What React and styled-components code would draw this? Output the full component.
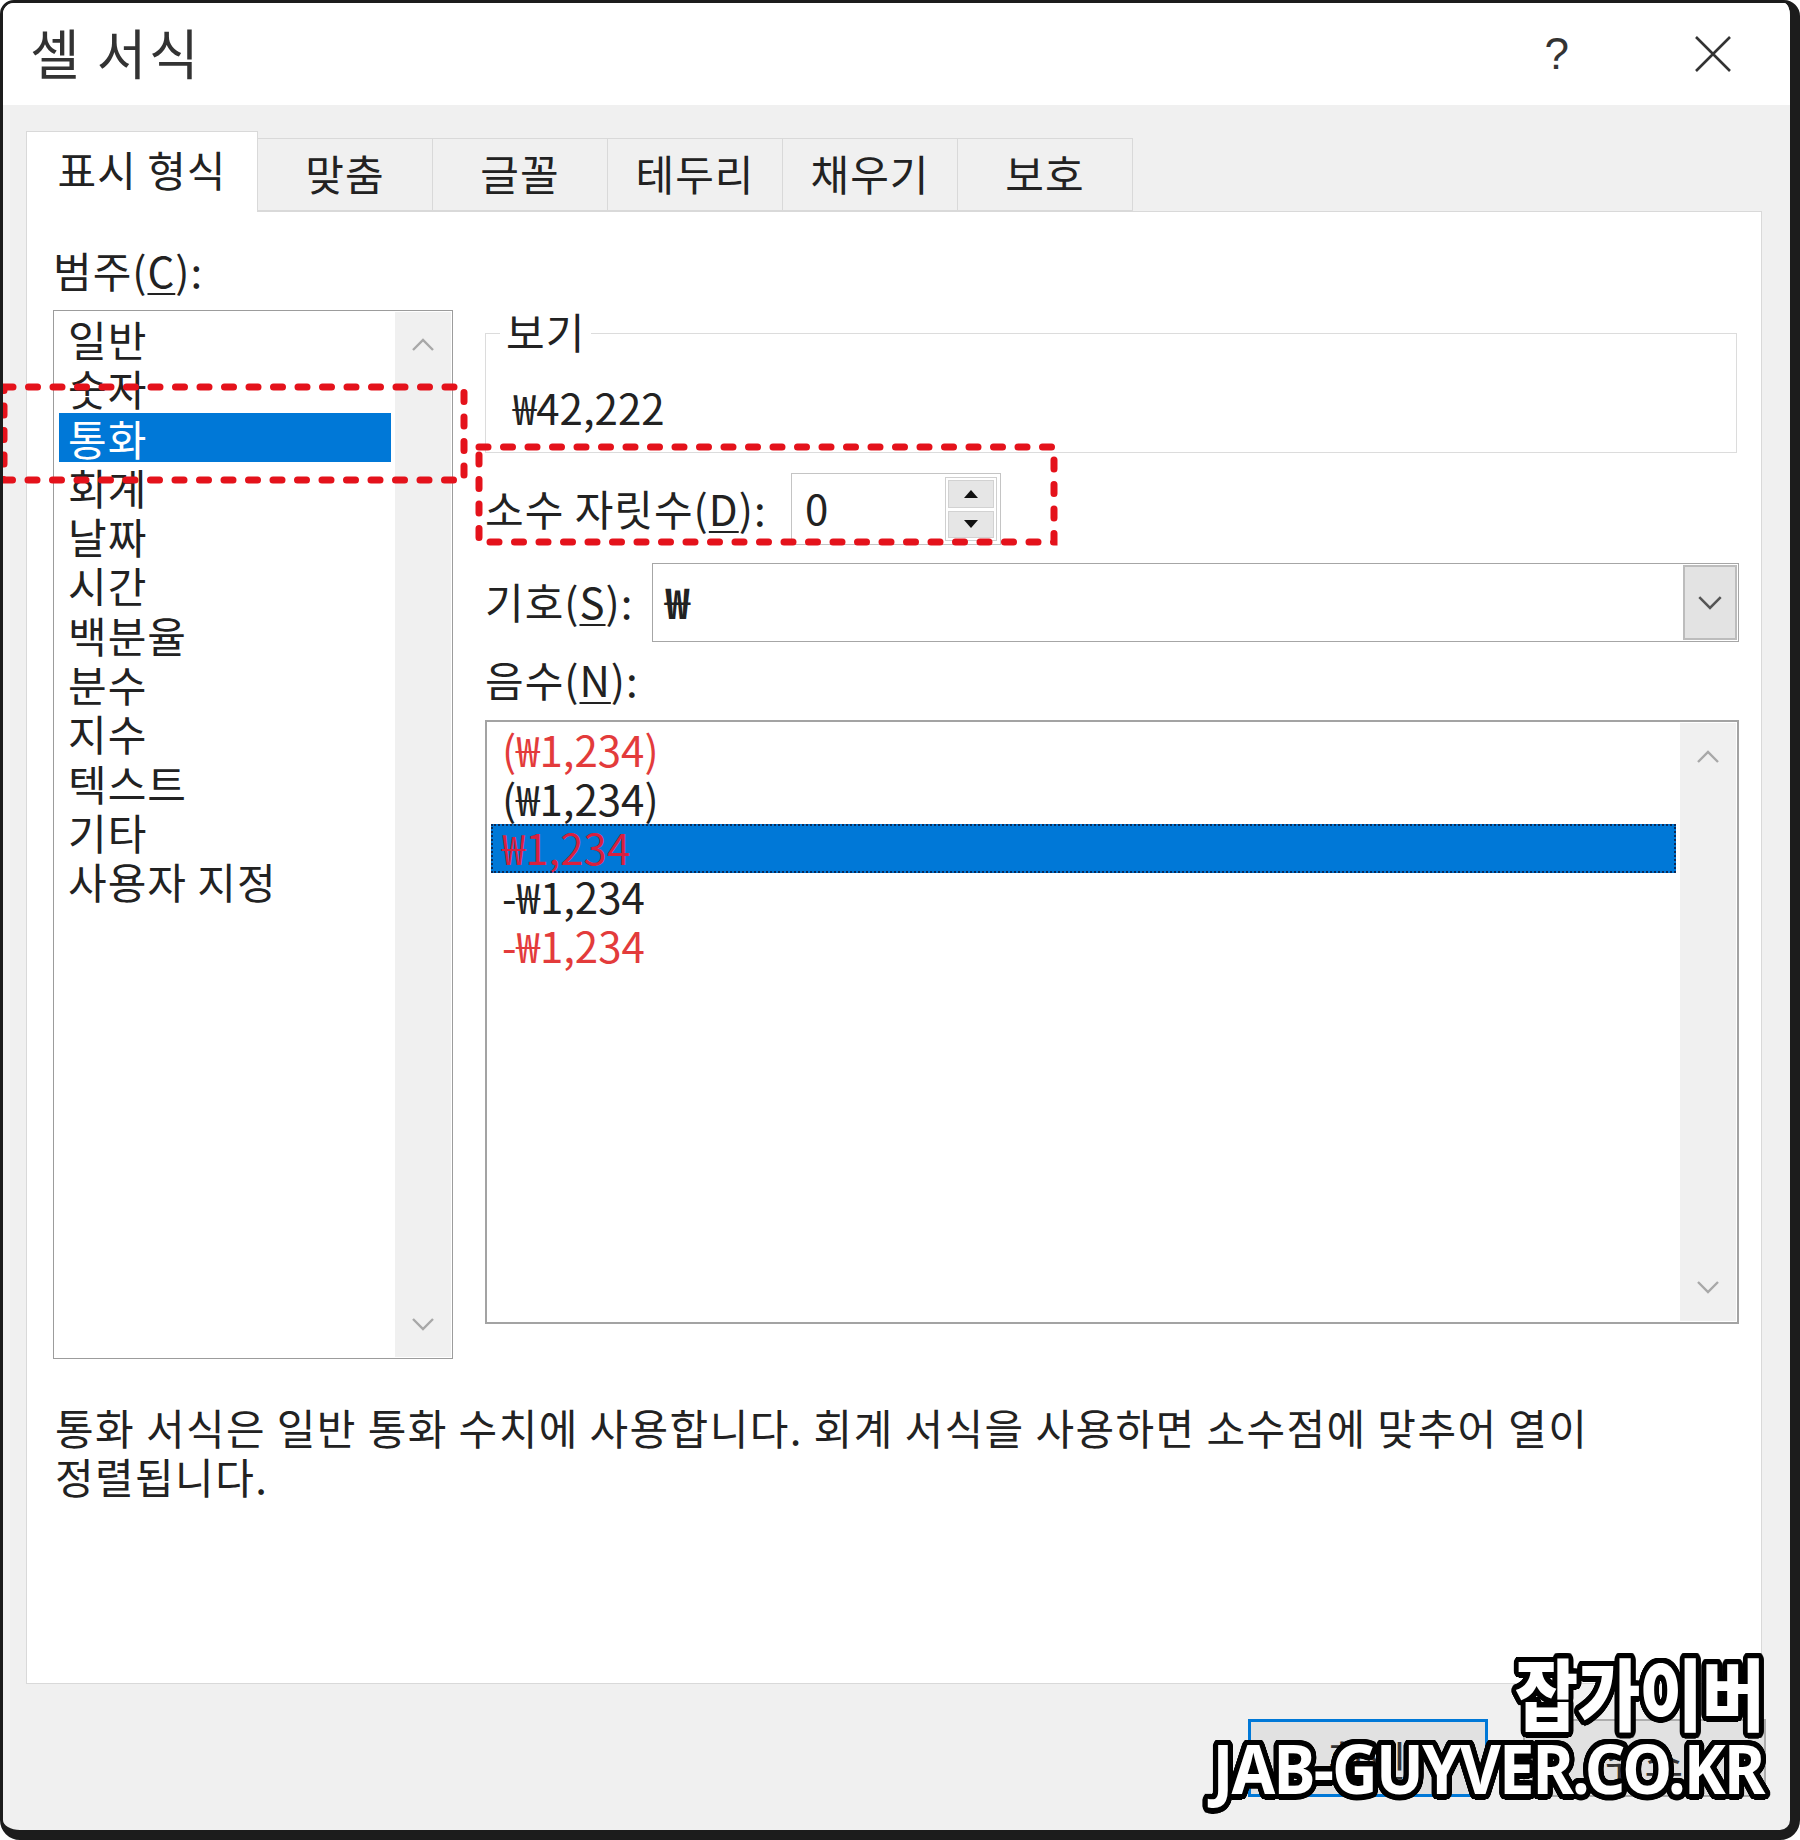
import React from 'react';
import styled, { createGlobalStyle } from 'styled-components';

const KR = `"Noto Sans CJK KR", "Malgun Gothic", "Noto Sans", sans-serif`;

// ring of shadows used as a thick outline for the watermark
const ring = (r, color) => {
  const out = [];
  for (let i = 0; i < 32; i++) {
    const a = (i / 32) * Math.PI * 2;
    out.push(`${(Math.cos(a) * r).toFixed(1)}px ${(Math.sin(a) * r).toFixed(1)}px 0 ${color}`);
  }
  return out.join(', ');
};

const categories = ['일반', '숫자', '통화', '회계', '날짜', '시간', '백분율', '분수', '지수', '텍스트', '기타', '사용자 지정'];

const negatives = [
  { text: '(₩1,234)', red: true },
  { text: '(₩1,234)' },
  { text: '₩1,234', red: true, selected: true },
  { text: '-₩1,234' },
  { text: '-₩1,234', red: true },
];

const tabs = ['맞춤', '글꼴', '테두리', '채우기', '보호'];

const Global = createGlobalStyle`
  html, body { margin: 0; padding: 0; background: #fff; }
  * { box-sizing: border-box; }
`;

const Chevron = ({ up, color = '#a8a8a8', w = 24 }) => (
  <svg width={w} height={w / 2 + 2} viewBox="0 0 24 14">
    <polyline
      points={up ? '2,12 12,2 22,12' : '2,2 12,12 22,2'}
      fill="none"
      stroke={color}
      strokeWidth="2.4"
    />
  </svg>
);

const App = () => {
  return (
    <>
      <Global />
      <Frame>
        <TitleBar>
          <Title>셀 서식</Title>
          <TitleControls>
            <HelpMark>?</HelpMark>
            <svg width="40" height="40" viewBox="0 0 40 40">
              <path d="M3 3 L37 37 M37 3 L3 37" stroke="#333" strokeWidth="2.6" />
            </svg>
          </TitleControls>
        </TitleBar>

        <Body>
          <Tabs>
            <Tab $active>표시 형식</Tab>
            {tabs.map(t => <Tab key={t}>{t}</Tab>)}
          </Tabs>

          <Panel>
            <Columns>
              <div>
                <Label>범주(<u>C</u>):</Label>
                <CategoryBox>
                  <Items $pad="3px 4px 0 5px">
                    {categories.map(c => (
                      <CatItem key={c} $selected={c === '통화'}>{c}</CatItem>
                    ))}
                  </Items>
                  <ScrollBar $pad="26px">
                    <Chevron up />
                    <Chevron />
                  </ScrollBar>
                </CategoryBox>
              </div>

              <RightCol>
                <Group>
                  <Legend>보기</Legend>
                  <PreviewValue>₩42,222</PreviewValue>
                </Group>

                <FieldRow $top={20}>
                  <Label $width={306}>소수 자릿수(<u>D</u>):</Label>
                  <SpinBox>
                    0
                    <Spinner>
                      <SpinButton><Tri $up /></SpinButton>
                      <SpinButton><Tri /></SpinButton>
                    </Spinner>
                  </SpinBox>
                </FieldRow>

                <FieldRow $top={18}>
                  <Label $width={167}>기호(<u>S</u>):</Label>
                  <Combo>
                    <ComboValue>₩</ComboValue>
                    <ComboButton><Chevron color="#555" w={26} /></ComboButton>
                  </Combo>
                </FieldRow>

                <NegLabel>음수(<u>N</u>):</NegLabel>
                <NegBox>
                  <Items $pad="4px 2px 0 4px">
                    {negatives.map((n, i) => (
                      <NegItem key={i} $red={n.red} $selected={n.selected}>{n.text}</NegItem>
                    ))}
                  </Items>
                  <ScrollBar $pad="27px">
                    <Chevron up />
                    <Chevron />
                  </ScrollBar>
                </NegBox>
              </RightCol>
            </Columns>

            <Description>
              통화 서식은 일반 통화 수치에 사용합니다. 회계 서식을 사용하면 소수점에 맞추어 열이
              <br />
              정렬됩니다.
            </Description>
          </Panel>

          <Footer>
            <Button $primary>확인</Button>
            <Button>취소</Button>
          </Footer>
        </Body>

        <Annotation $x={1} $y={384} $w={460} $h={93} />
        <Annotation $x={476} $y={444} $w={575} $h={95} />

        <Watermark>
          <MarkKo>잡가이버</MarkKo>
          <MarkEn>JAB-GUYVER.CO.KR</MarkEn>
        </Watermark>
      </Frame>
    </>
  );
};

const Annotation = ({ $x, $y, $w, $h }) => (
  <AnnotationSvg $x={$x} $y={$y} width={$w + 10} height={$h + 10}>
    <rect
      x="5" y="5" width={$w} height={$h}
      fill="none"
      stroke="#e4121b"
      strokeWidth="7"
      strokeDasharray="9 15.5"
      strokeLinecap="round"
    />
  </AnnotationSvg>
);

const Frame = styled.div`
  position: relative;
  width: 1800px;
  height: 1840px;
  border: 3px solid #1c1c1c;
  border-right-width: 10px;
  border-bottom-width: 10px;
  border-radius: 14px 16px 20px 20px;
  background: #f0f0f0;
  overflow: hidden;
  display: flex;
  flex-direction: column;
  font-family: ${KR};
  color: #222;
`;

const TitleBar = styled.div`
  height: 102px;
  flex-shrink: 0;
  background: #fff;
  display: flex;
  align-items: center;
  padding-left: 27px;
`;

const Title = styled.div`
  font-size: 54px;
  letter-spacing: 2.5px;
  color: #333;
  line-height: 1;
  margin-top: -4px;
`;

const TitleControls = styled.div`
  margin-left: auto;
  display: flex;
  align-items: center;
  gap: 124px;
  padding-right: 57px;
`;

const HelpMark = styled.div`
  font-family: "Liberation Sans", sans-serif;
  font-size: 44px;
  color: #333;
  line-height: 1;
`;

const Body = styled.div`
  flex: 1;
  padding: 26px 28px 0 23px;
`;

const Tabs = styled.div`
  display: flex;
  align-items: flex-end;
  height: 80px;
`;

const Tab = styled.div`
  width: ${p => (p.$active ? 232 : 175)}px;
  height: ${p => (p.$active ? 81 : 73)}px;
  margin-bottom: ${p => (p.$active ? -1 : 0)}px;
  position: relative;
  z-index: ${p => (p.$active ? 1 : 0)};
  background: ${p => (p.$active ? '#fff' : '#f0f0f0')};
  border: 1px solid #d9d9d9;
  border-bottom: ${p => (p.$active ? 'none' : '1px solid #d9d9d9')};
  border-left-width: ${p => (p.$active ? 1 : 0)}px;
  display: flex;
  align-items: center;
  justify-content: center;
  padding-bottom: ${p => (p.$active ? 8 : 4)}px;
  font-size: 42px;
  letter-spacing: 1px;
  color: #222;
`;

const Panel = styled.div`
  height: 1473px;
  background: #fff;
  border: 1px solid #d9d9d9;
  padding: 33px 22px 0 26px;
`;

const Columns = styled.div`
  display: grid;
  grid-template-columns: 400px 1254px;
  column-gap: 32px;
  align-items: start;
`;

const Label = styled.div`
  font-size: 42px;
  line-height: 49px;
  letter-spacing: 1px;
  margin-bottom: ${p => (p.$width ? 0 : 16)}px;
  width: ${p => (p.$width ? `${p.$width}px` : 'auto')};
  flex-shrink: 0;
  white-space: nowrap;
  padding-bottom: ${p => (p.$width ? 4 : 0)}px;

  u { text-underline-offset: 5px; text-decoration-thickness: 2px; }
`;

const CategoryBox = styled.div`
  height: 1049px;
  border: 1px solid #9c9c9c;
  display: flex;
  background: #fff;
`;

const Items = styled.div`
  flex: 1;
  padding: ${p => p.$pad};
  min-width: 0;
`;

const CatItem = styled.div`
  font-size: 42px;
  line-height: 49.3px;
  height: 49.3px;
  letter-spacing: 1px;
  padding-left: 9px;
  background: ${p => (p.$selected ? '#0078d7' : 'transparent')};
  color: ${p => (p.$selected ? '#fff' : '#222')};
`;

const ScrollBar = styled.div`
  width: 56px;
  flex-shrink: 0;
  margin: 1px 1px 1px 0;
  background: #f0f0f0;
  display: flex;
  flex-direction: column;
  align-items: center;
  justify-content: space-between;
  padding: ${p => p.$pad} 0;
`;

const RightCol = styled.div`
  padding-top: 64px;
`;

const Group = styled.fieldset`
  margin: 0;
  padding: 0 18px 21px 14px;
  border: 1px solid #dcdcdc;
  min-width: 0;
  width: 1252px;
`;

const Legend = styled.legend`
  padding: 0 6px;
  font-size: 42px;
  line-height: 49px;
  letter-spacing: 1px;
  transform: translateY(-3px);
`;

const PreviewValue = styled.div`
  margin-top: 24px;
  padding-left: 13px;
  font-size: 42px;
  line-height: 49px;
  letter-spacing: 0px;
`;

const FieldRow = styled.div`
  display: flex;
  align-items: center;
  margin-top: ${p => p.$top}px;
`;

const SpinBox = styled.div`
  width: 210px;
  height: 72px;
  border: 1px solid #c4c4c4;
  background: #fff;
  display: flex;
  align-items: center;
  padding-left: 13px;
  padding-bottom: 4px;
  font-size: 42px;
  line-height: 1;
`;

const Spinner = styled.div`
  margin-left: auto;
  margin-right: 3px;
  margin-bottom: -4px;
  width: 52px;
  height: 64px;
  border: 1px solid #cfcfcf;
  padding: 2px;
  display: flex;
  flex-direction: column;
  gap: 3px;
`;

const SpinButton = styled.div`
  flex: 1;
  background: #e6e6e6;
  border: 1px solid #d2d2d2;
  display: flex;
  align-items: center;
  justify-content: center;
`;

const Tri = styled.div`
  width: 0;
  height: 0;
  border-left: 7px solid transparent;
  border-right: 7px solid transparent;
  ${p => (p.$up ? 'border-bottom: 8px solid #111;' : 'border-top: 8px solid #111;')}
`;

const Combo = styled.div`
  flex: 1;
  height: 79px;
  border: 1px solid #a6a6a6;
  background: #fff;
  display: flex;
`;

const ComboValue = styled.div`
  flex: 1;
  display: flex;
  align-items: center;
  padding-left: 12px;
  padding-bottom: 4px;
  font-size: 42px;
  font-weight: 700;
`;

const ComboButton = styled.div`
  width: 54px;
  margin: 1px;
  background: #e3e3e3;
  border: 2px solid #bcbcbc;
  display: flex;
  align-items: center;
  justify-content: center;
`;

const NegLabel = styled(Label)`
  margin-top: 12px;
  margin-bottom: 0;
  padding-bottom: 0;
`;

const NegBox = styled.div`
  margin-top: 17px;
  width: 1254px;
  height: 604px;
  border: 2px solid #a3a3a3;
  display: flex;
  background: #fff;
`;

const NegItem = styled.div`
  font-size: 42px;
  line-height: 45px;
  height: 49px;
  letter-spacing: 0px;
  padding-left: 11px;
  margin-right: 2px;
  color: ${p => (p.$red ? (p.$selected ? '#d8203f' : '#e33b3b') : '#222')};
  background: ${p => (p.$selected ? '#0078d7' : 'transparent')};
  outline: ${p => (p.$selected ? '2px dotted #0b2a58' : 'none')};
  outline-offset: -2px;
`;

const Description = styled.div`
  margin-top: 43px;
  padding-left: 2px;
  font-size: 42px;
  line-height: 49px;
  letter-spacing: 1.4px;
  white-space: nowrap;
`;

const Footer = styled.div`
  display: flex;
  justify-content: flex-end;
  gap: 35px;
  margin-top: 35px;
  margin-right: -4px;
`;

const Button = styled.div`
  width: ${p => (p.$primary ? 240 : 243)}px;
  height: 78px;
  background: #e1e1e1;
  border: ${p => (p.$primary ? '3px solid #0078d7' : '2px solid #adadad')};
  display: flex;
  align-items: center;
  justify-content: center;
  font-size: 42px;
  letter-spacing: 1px;
  color: #333;
`;

const AnnotationSvg = styled.svg`
  position: absolute;
  left: ${p => p.$x - 5}px;
  top: ${p => p.$y - 5}px;
  pointer-events: none;
`;

const Watermark = styled.div`
  position: absolute;
  right: 26px;
  top: 1648px;
  display: flex;
  flex-direction: column;
  align-items: flex-end;
  color: #fff;
  font-weight: 900;
  text-shadow: ${ring(5.5, '#000')};
`;

const MarkKo = styled.div`
  font-family: ${KR};
  font-size: 78px;
  line-height: 80px;
  letter-spacing: -1px;
  transform: scaleX(0.88);
  transform-origin: right center;
`;

const MarkEn = styled.div`
  font-family: "Noto Sans", "Liberation Sans", sans-serif;
  font-weight: 700;
  font-size: 68px;
  line-height: 74px;
  letter-spacing: -2px;
  transform: scaleX(0.93);
  transform-origin: right center;
`;

export default App;
